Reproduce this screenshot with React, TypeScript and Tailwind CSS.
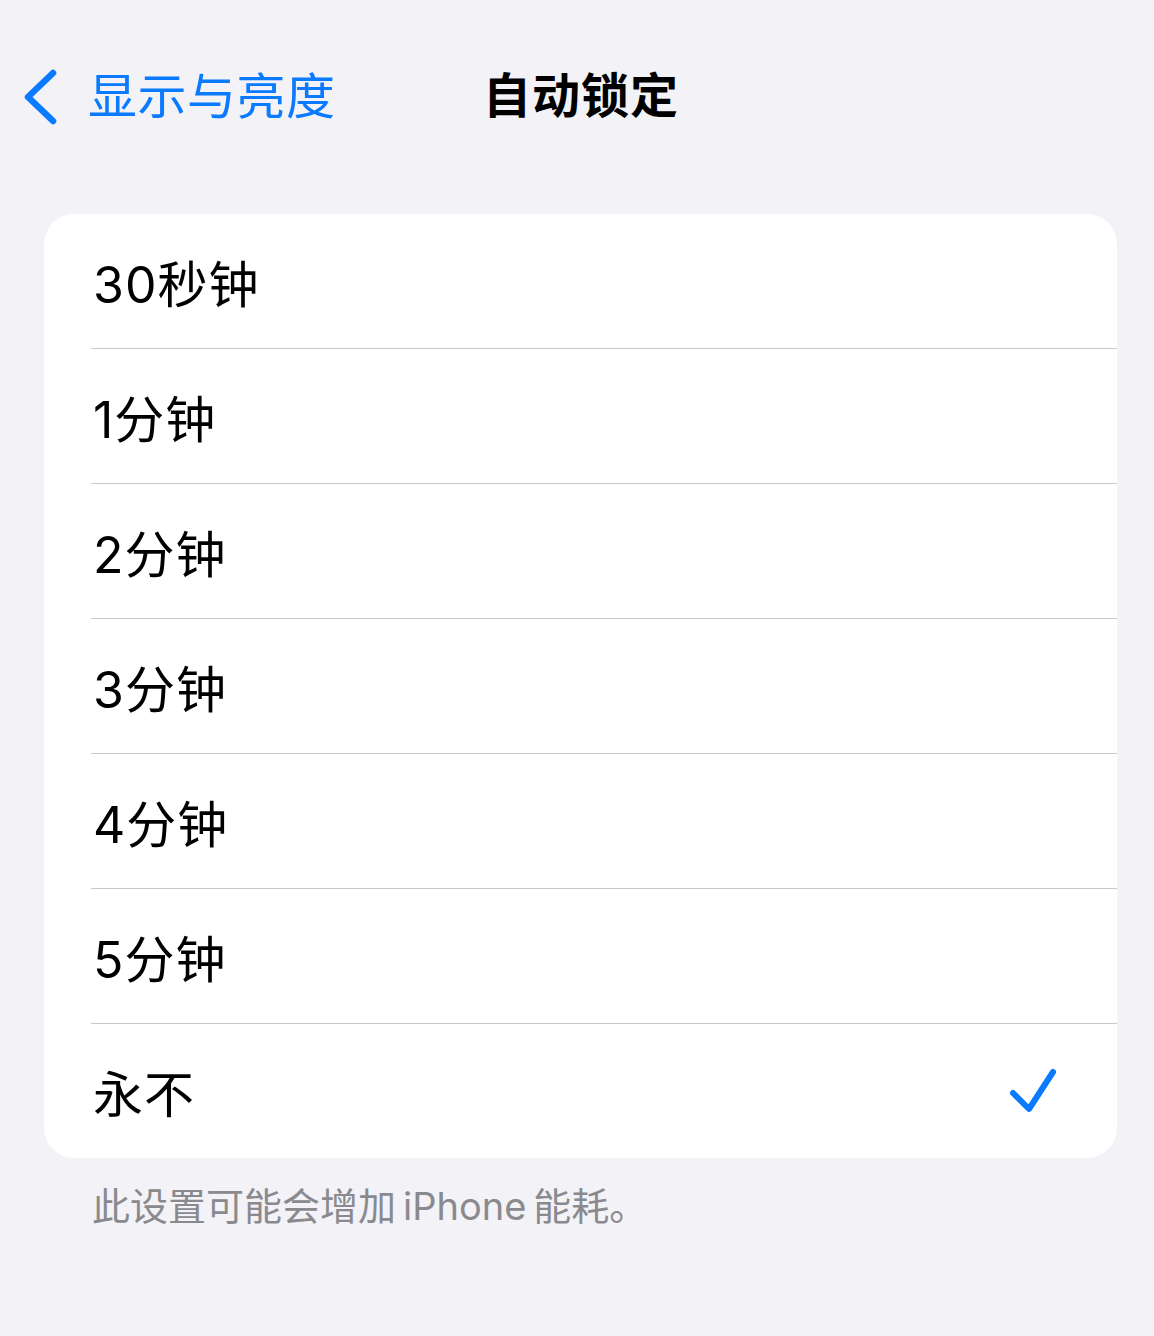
const options = ['30秒钟', '1分钟', '2分钟', '3分钟', '4分钟', '5分钟', '永不'];
const selected = '永不';

export default function App() {
  return (
    <div
      className="min-h-[1336px] w-full bg-[#f2f2f7] text-black"
      style={{ fontFamily: '"Inter", "Noto Sans CJK SC", sans-serif' }}
    >
      {/* Nav bar */}
      <div className="relative flex h-[192px] items-center">
        <div className="flex items-center pl-[22px] text-[#0a7aff]">
          <svg width="36" height="56" viewBox="0 0 36 56" fill="none" className="mt-[2px]">
            <path
              d="M31 4 L6 28 L31 52"
              stroke="#0a7aff"
              strokeWidth="6.5"
              strokeLinecap="round"
              strokeLinejoin="round"
            />
          </svg>
          <span className="ml-[30px] text-[49px] leading-none tracking-[0.5px]">显示与亮度</span>
        </div>
        <h1 className="absolute left-0 right-0 pl-[8px] text-center text-[48px] font-semibold leading-none tracking-[1px]">
          自动锁定
        </h1>
      </div>

      {/* Options card */}
      <div className="mt-[22px] ml-[44px] mr-[37px] overflow-hidden rounded-[30px] bg-white">
        {options.map((opt, i) => (
          <div key={opt} className="pl-[47px]">
            {i > 0 && <div className="h-px bg-[#c8c8cc]" />}
            <div className="flex h-[134px] items-center justify-between pr-[60px]">
              <span className="pl-[2px] pt-[8px] text-[50px] leading-none tracking-[1px]">{opt}</span>
              {opt === selected && (
                <svg width="48" height="48" viewBox="0 0 48 48" fill="none">
                  <path
                    d="M4 26 L20 42 L44 5"
                    stroke="#0a7aff"
                    strokeWidth="6"
                    strokeLinecap="round"
                    strokeLinejoin="round"
                  />
                </svg>
              )}
            </div>
          </div>
        ))}
      </div>

      {/* Footer */}
      <p className="mt-[29px] pl-[92px] text-[38px] leading-none text-[#8a8a8e]">
        此设置可能会增加<span className="mx-[7px]">iPhone</span>能耗。
      </p>
    </div>
  );
}
